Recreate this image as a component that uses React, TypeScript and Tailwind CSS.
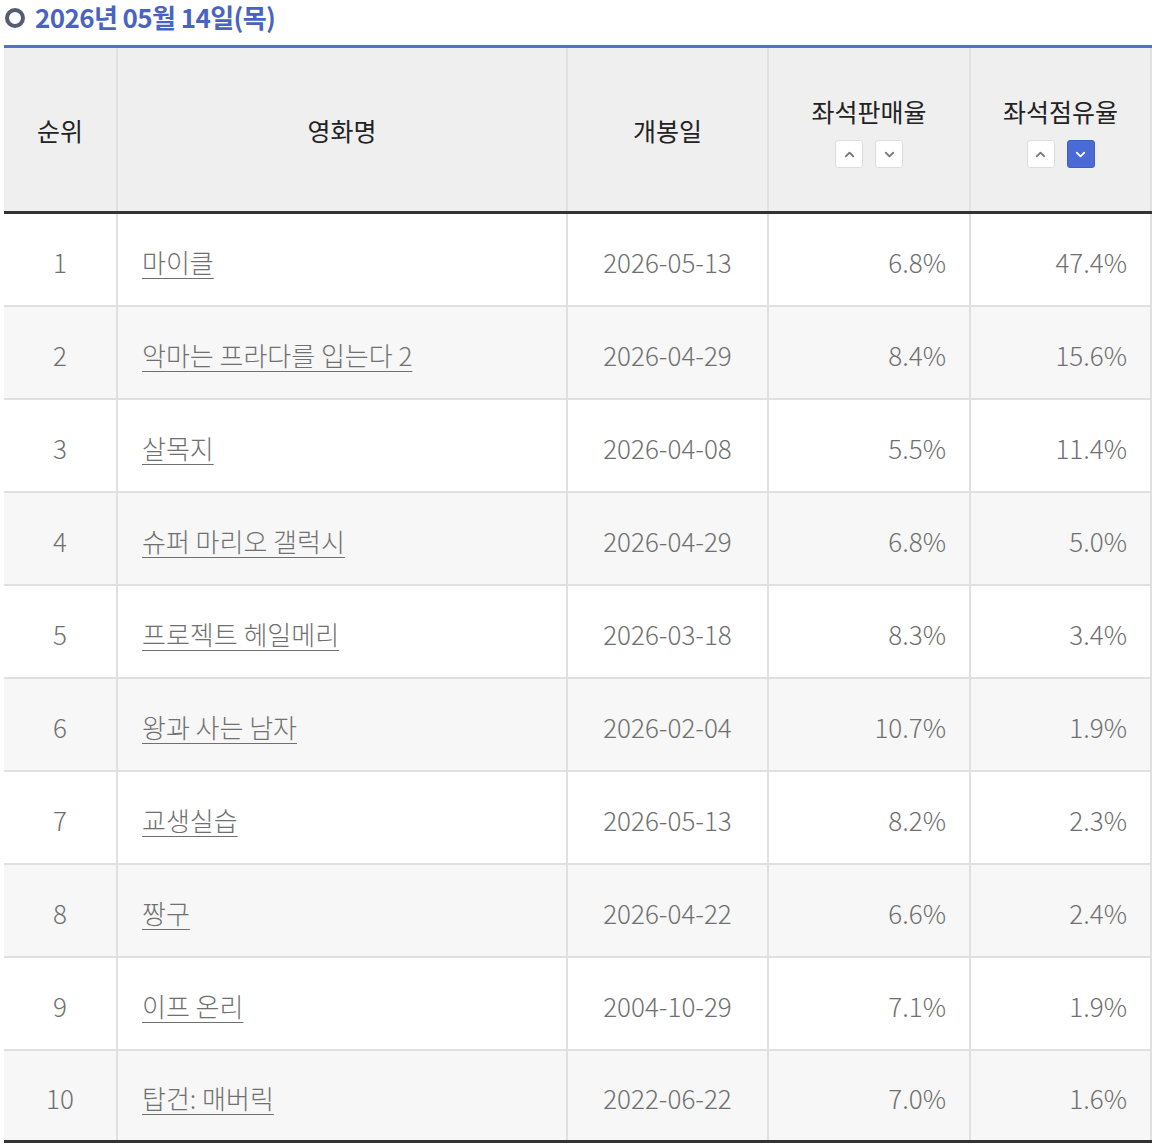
import { ChevronUp, ChevronDown } from 'lucide-react';

const rows = [
  { rank: 1, title: '마이클', open: '2026-05-13', sales: '6.8%', share: '47.4%' },
  { rank: 2, title: '악마는 프라다를 입는다 2', open: '2026-04-29', sales: '8.4%', share: '15.6%' },
  { rank: 3, title: '살목지', open: '2026-04-08', sales: '5.5%', share: '11.4%' },
  { rank: 4, title: '슈퍼 마리오 갤럭시', open: '2026-04-29', sales: '6.8%', share: '5.0%' },
  { rank: 5, title: '프로젝트 헤일메리', open: '2026-03-18', sales: '8.3%', share: '3.4%' },
  { rank: 6, title: '왕과 사는 남자', open: '2026-02-04', sales: '10.7%', share: '1.9%' },
  { rank: 7, title: '교생실습', open: '2026-05-13', sales: '8.2%', share: '2.3%' },
  { rank: 8, title: '짱구', open: '2026-04-22', sales: '6.6%', share: '2.4%' },
  { rank: 9, title: '이프 온리', open: '2004-10-29', sales: '7.1%', share: '1.9%' },
  { rank: 10, title: '탑건: 매버릭', open: '2022-06-22', sales: '7.0%', share: '1.6%' },
];

function SortButtons({ active }: { active?: 'up' | 'down' }) {
  return (
    <div className="mt-[10px] flex justify-center gap-[12px]">
      <span
        className={
          active === 'up'
            ? 'flex h-[28px] w-[28px] items-center justify-center rounded-[3px] border border-[#3f5fc8] bg-[#4a6ad6] text-white'
            : 'flex h-[28px] w-[28px] items-center justify-center rounded-[3px] border border-[#dddddd] bg-white text-[#777]'
        }
      >
        <ChevronUp size={15} strokeWidth={3} />
      </span>
      <span
        className={
          active === 'down'
            ? 'flex h-[28px] w-[28px] items-center justify-center rounded-[3px] border border-[#3f5fc8] bg-[#4a6ad6] text-white'
            : 'flex h-[28px] w-[28px] items-center justify-center rounded-[3px] border border-[#dddddd] bg-white text-[#777]'
        }
      >
        <ChevronDown size={15} strokeWidth={3} />
      </span>
    </div>
  );
}

export default function App() {
  return (
    <div
      className="w-[1152px] bg-white"
      style={{ fontFamily: '"Noto Sans CJK KR", "Noto Sans", sans-serif' }}
    >
      {/* 날짜 제목 */}
      <div className="flex h-[45px] items-start gap-[10px] pl-[5px] pt-[1px]">
        <span className="mt-[7px] block h-[20px] w-[20px] shrink-0 rounded-full border-[4px] border-[#565c72]" />
        <h2 className="text-[26px] font-bold leading-[32px] tracking-[-0.6px] text-[#4a63c2]">
          2026년 05월 14일(목)
        </h2>
      </div>

      {/* 박스오피스 표 */}
      <div className="pl-[4px]">
        <table className="w-[1148px] table-fixed border-collapse border-t-[3px] border-[#5570c9]">
          <colgroup>
            <col className="w-[113px]" />
            <col className="w-[450px]" />
            <col className="w-[201px]" />
            <col className="w-[202px]" />
            <col />
          </colgroup>
          <thead>
            <tr className="h-[166px] border-b-[3px] border-[#333333] bg-[#efefef] text-[25px] text-[#222]">
              <th className="pt-[2px] font-normal">순위</th>
              <th className="border-l-2 border-[#e0e0e0] pt-[2px] font-normal">영화명</th>
              <th className="border-l-2 border-[#e0e0e0] pt-[2px] font-normal">개봉일</th>
              <th className="border-l-2 border-[#e0e0e0] pt-[2px] font-normal">
                <div>좌석판매율</div>
                <SortButtons />
              </th>
              <th className="border-x-2 border-[#e0e0e0] pt-[2px] font-normal">
                <div>좌석점유율</div>
                <SortButtons active="down" />
              </th>
            </tr>
          </thead>
          <tbody className="text-[26px] font-light text-[#707070]">
            {rows.map((r, i) => (
              <tr
                key={r.rank}
                className={
                  i === rows.length - 1
                    ? 'h-[92px] border-b-[3px] border-[#333333] bg-[#f7f7f7]'
                    : i % 2 === 1
                      ? 'h-[93px] border-b-2 border-[#e0e0e0] bg-[#f7f7f7]'
                      : 'h-[93px] border-b-2 border-[#e0e0e0] bg-white'
                }
              >
                <td className="pt-[5px] text-center">{r.rank}</td>
                <td className="border-l-2 border-[#e0e0e0] pl-[24px] pt-[5px]">
                  <span className="underline decoration-1 underline-offset-[5px]">{r.title}</span>
                </td>
                <td className="border-l-2 border-[#e0e0e0] pt-[5px] text-center">{r.open}</td>
                <td className="border-l-2 border-[#e0e0e0] pr-[23px] pt-[5px] text-right">{r.sales}</td>
                <td className="border-x-2 border-[#e0e0e0] pr-[23px] pt-[5px] text-right">{r.share}</td>
              </tr>
            ))}
          </tbody>
        </table>
      </div>
    </div>
  );
}
